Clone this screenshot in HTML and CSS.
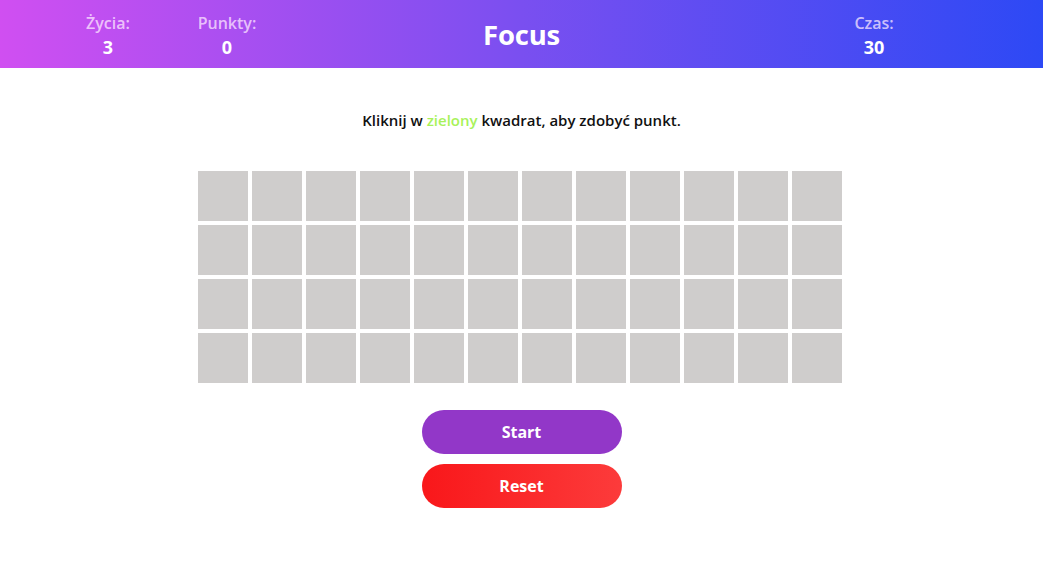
FILE: index.html
```html
<!DOCTYPE html>
<html lang="pl">
<head>
<meta charset="utf-8">
<title>Focus</title>
<link rel="stylesheet" href="styles.css">
</head>
<body>
<header class="topbar">
  <div class="stats-left">
    <div class="stat"><span class="stat-label">Życia:</span><span class="stat-value">3</span></div>
    <div class="stat"><span class="stat-label">Punkty:</span><span class="stat-value">0</span></div>
  </div>
  <h1 class="title">Focus</h1>
  <div class="stats-right">
    <div class="stat"><span class="stat-label">Czas:</span><span class="stat-value">30</span></div>
  </div>
</header>
<main class="game">
  <p class="hint">Kliknij w <span class="green">zielony</span> kwadrat, aby zdobyć punkt.</p>
  <div class="board">
    <div class="cell"></div><div class="cell"></div><div class="cell"></div><div class="cell"></div><div class="cell"></div><div class="cell"></div><div class="cell"></div><div class="cell"></div><div class="cell"></div><div class="cell"></div><div class="cell"></div><div class="cell"></div>
    <div class="cell"></div><div class="cell"></div><div class="cell"></div><div class="cell"></div><div class="cell"></div><div class="cell"></div><div class="cell"></div><div class="cell"></div><div class="cell"></div><div class="cell"></div><div class="cell"></div><div class="cell"></div>
    <div class="cell"></div><div class="cell"></div><div class="cell"></div><div class="cell"></div><div class="cell"></div><div class="cell"></div><div class="cell"></div><div class="cell"></div><div class="cell"></div><div class="cell"></div><div class="cell"></div><div class="cell"></div>
    <div class="cell"></div><div class="cell"></div><div class="cell"></div><div class="cell"></div><div class="cell"></div><div class="cell"></div><div class="cell"></div><div class="cell"></div><div class="cell"></div><div class="cell"></div><div class="cell"></div><div class="cell"></div>
  </div>
  <div class="controls">
    <button class="btn btn-start">Start</button>
    <button class="btn btn-reset">Reset</button>
  </div>
</main>
</body>
</html>
```
FILE: styles.css
```css
* { box-sizing: border-box; }
html, body { margin: 0; padding: 0; background: #fff; }
body { font-family: "Open Sans", "Noto Sans", sans-serif; color: #111; }

.topbar {
  height: 68px;
  display: grid;
  grid-template-columns: 1fr auto 1fr;
  align-items: center;
  background: linear-gradient(to right, #d04ff1, #7a4ff0 50%, #2d49f5);
  color: #fff;
}
.stats-left {
  display: flex;
  gap: 39px;
  padding-left: 68px;
}
.stats-right {
  display: flex;
  justify-content: flex-end;
  padding-right: 129px;
}
.stat {
  width: 80px;
  display: flex;
  flex-direction: column;
  align-items: center;
  line-height: 24px;
  padding-top: 2px;
}
.stat-label {
  font-size: 16px;
  font-weight: 600;
  color: rgba(255,235,255,0.74);
}
.stat-value {
  font-size: 18px;
  font-weight: 700;
}
.title {
  margin: 0;
  font-size: 27.5px;
  font-weight: 700;
  letter-spacing: -0.2px;
}

.game {
  display: flex;
  flex-direction: column;
  align-items: center;
}
.hint {
  margin: 40px 0 0;
  font-size: 15px;
  font-weight: 600;
  line-height: 24px;
}
.green { color: #a8f25a; }

.board {
  margin-top: 39px;
  margin-right: 3px;
  display: grid;
  grid-template-columns: repeat(12, 50px);
  grid-auto-rows: 50px;
  gap: 4px;
}
.cell { background: #cfcdcc; }

.controls {
  margin-top: 27px;
  display: flex;
  flex-direction: column;
  gap: 10px;
}
.btn {
  width: 200px;
  height: 44px;
  border: 0;
  border-radius: 22px;
  color: #fff;
  font-family: inherit;
  font-size: 16px;
  font-weight: 700;
  cursor: pointer;
}
.btn-start { background: #9237c8; }
.btn-reset { background: linear-gradient(to right, #f9171a, #fc3b3b); }
```
